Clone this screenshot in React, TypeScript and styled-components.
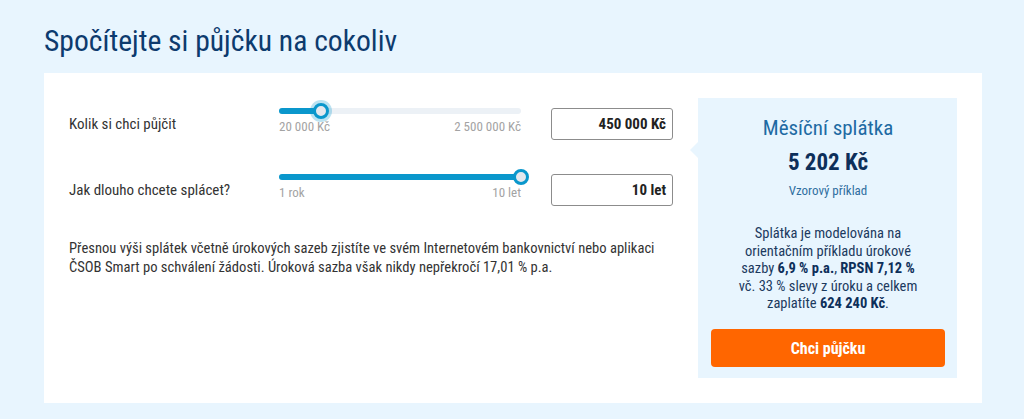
import styled, { createGlobalStyle } from "styled-components"

const GlobalStyle = createGlobalStyle`
  html, body {
    margin: 0;
    padding: 0;
    background: #e8f5fe;
  }
  body {
    font-family: "Roboto Condensed", Roboto, sans-serif;
    font-stretch: condensed;
    color: #333;
  }
`

const Page = styled.div`
  width: 1024px;
  height: 419px;
  background: #e8f5fe;
  padding: 0 42px 0 44px;
  box-sizing: border-box;
`

const Title = styled.h1`
  margin: 0;
  padding-top: 24px;
  height: 73px;
  box-sizing: border-box;
  font-size: 29.6px;
  line-height: 34px;
  font-weight: 400;
  color: #0d3b6e;
`

const Card = styled.div`
  display: flex;
  gap: 25px;
  height: 330px;
  box-sizing: border-box;
  padding: 25px;
  background: #fff;
`

const Form = styled.div`
  flex: 1;
  display: flex;
  flex-direction: column;
`

const Row = styled.div`
  display: flex;
  align-items: flex-start;
  height: 66px;
`

const Label = styled.div`
  width: 210px;
  padding-top: 17px;
  font-size: 15px;
  line-height: 18px;
  color: #333;
`

const SliderBox = styled.div`
  width: 242px;
  padding-top: 10px;
  margin-right: 30px;
`

const Track = styled.div`
  position: relative;
  height: 6px;
  border-radius: 3px;
  background: #ecf1f6;
`

const Fill = styled.div`
  height: 100%;
  border-radius: 3px;
  background: #0a97cc;
`

const Thumb = styled.div<{ $focus?: boolean }>`
  position: absolute;
  top: 50%;
  width: 10px;
  height: 10px;
  border-radius: 50%;
  background: #e4e8ee;
  border: 3px solid #0a97cc;
  transform: translate(-50%, -50%);
  box-shadow: ${(p) => (p.$focus ? "0 0 0 3px rgba(10, 151, 204, 0.28)" : "none")};
`

const Scale = styled.div`
  display: flex;
  justify-content: space-between;
  margin-top: 5px;
  font-size: 13px;
  line-height: 15px;
  color: #a3a3a3;
`

const Field = styled.div`
  width: 122px;
  height: 31.5px;
  margin-top: 10px;
  box-sizing: border-box;
  border: 1.5px solid #8c8c8c;
  border-radius: 3px;
  padding: 0 6px;
  display: flex;
  align-items: center;
  justify-content: flex-end;
  font-size: 15px;
  font-weight: 700;
  color: #222;
`

const Note = styled.p`
  margin: 9px 0 0;
  font-size: 14.6px;
  line-height: 19px;
  color: #333;
  white-space: nowrap;
`

const Summary = styled.div`
  position: relative;
  width: 259px;
  box-sizing: border-box;
  padding: 17px 12px 11px 13px;
  background: #e8f5fe;
  display: flex;
  flex-direction: column;
  align-items: center;
  text-align: center;

  &::before {
    content: "";
    position: absolute;
    left: -8px;
    top: 44px;
    border-top: 8px solid transparent;
    border-bottom: 8px solid transparent;
    border-right: 8px solid #e8f5fe;
  }
`

const SummaryTitle = styled.div`
  font-size: 21px;
  line-height: 26px;
  color: #1e6aa3;
`

const Amount = styled.div`
  margin-top: 8px;
  font-size: 23px;
  line-height: 28px;
  font-weight: 700;
  color: #0d2f5a;
`

const Example = styled.div`
  margin-top: 6px;
  font-size: 13px;
  line-height: 16px;
  color: #2f6ea0;
`

const Terms = styled.p`
  margin: 26px 0 0;
  font-size: 14.5px;
  line-height: 17.5px;
  color: #1c3a5e;

  b {
    font-weight: 700;
    color: #0d2f5a;
  }
`

const Button = styled.button`
  margin-top: auto;
  width: 100%;
  height: 38px;
  border: none;
  border-radius: 4px;
  background: #ff6600;
  color: #fff;
  font-family: inherit;
  font-stretch: condensed;
  font-size: 16px;
  font-weight: 700;
  cursor: pointer;
`

type SliderProps = {
  value: number
  min: number
  max: number
  from: string
  to: string
  focus?: boolean
}

function Slider({ value, min, max, from, to, focus }: SliderProps) {
  const pct = ((value - min) / (max - min)) * 100
  return (
    <SliderBox>
      <Track>
        <Fill style={{ width: `${pct}%` }} />
        <Thumb $focus={focus} style={{ left: `${pct}%` }} />
      </Track>
      <Scale>
        <span>{from}</span>
        <span>{to}</span>
      </Scale>
    </SliderBox>
  )
}

export default function App() {
  return (
    <Page>
      <GlobalStyle />
      <Title>Spočítejte si půjčku na cokoliv</Title>
      <Card>
        <Form>
          <Row>
            <Label>Kolik si chci půjčit</Label>
            <Slider value={450000} min={20000} max={2500000} from="20 000 Kč" to="2 500 000 Kč" focus />
            <Field>450 000 Kč</Field>
          </Row>
          <Row>
            <Label>Jak dlouho chcete splácet?</Label>
            <Slider value={10} min={1} max={10} from="1 rok" to="10 let" />
            <Field>10 let</Field>
          </Row>
          <Note>
            Přesnou výši splátek včetně úrokových sazeb zjistíte ve svém Internetovém bankovnictví nebo aplikaci
            <br />
            ČSOB Smart po schválení žádosti. Úroková sazba však nikdy nepřekročí 17,01 % p.a.
          </Note>
        </Form>
        <Summary>
          <SummaryTitle>Měsíční splátka</SummaryTitle>
          <Amount>5 202 Kč</Amount>
          <Example>Vzorový příklad</Example>
          <Terms>
            Splátka je modelována na
            <br />
            orientačním příkladu úrokové
            <br />
            sazby <b>6,9 % p.a.</b>, <b>RPSN 7,12 %</b>
            <br />
            vč. 33 % slevy z úroku a celkem
            <br />
            zaplatíte <b>624 240 Kč</b>.
          </Terms>
          <Button>Chci půjčku</Button>
        </Summary>
      </Card>
    </Page>
  )
}
